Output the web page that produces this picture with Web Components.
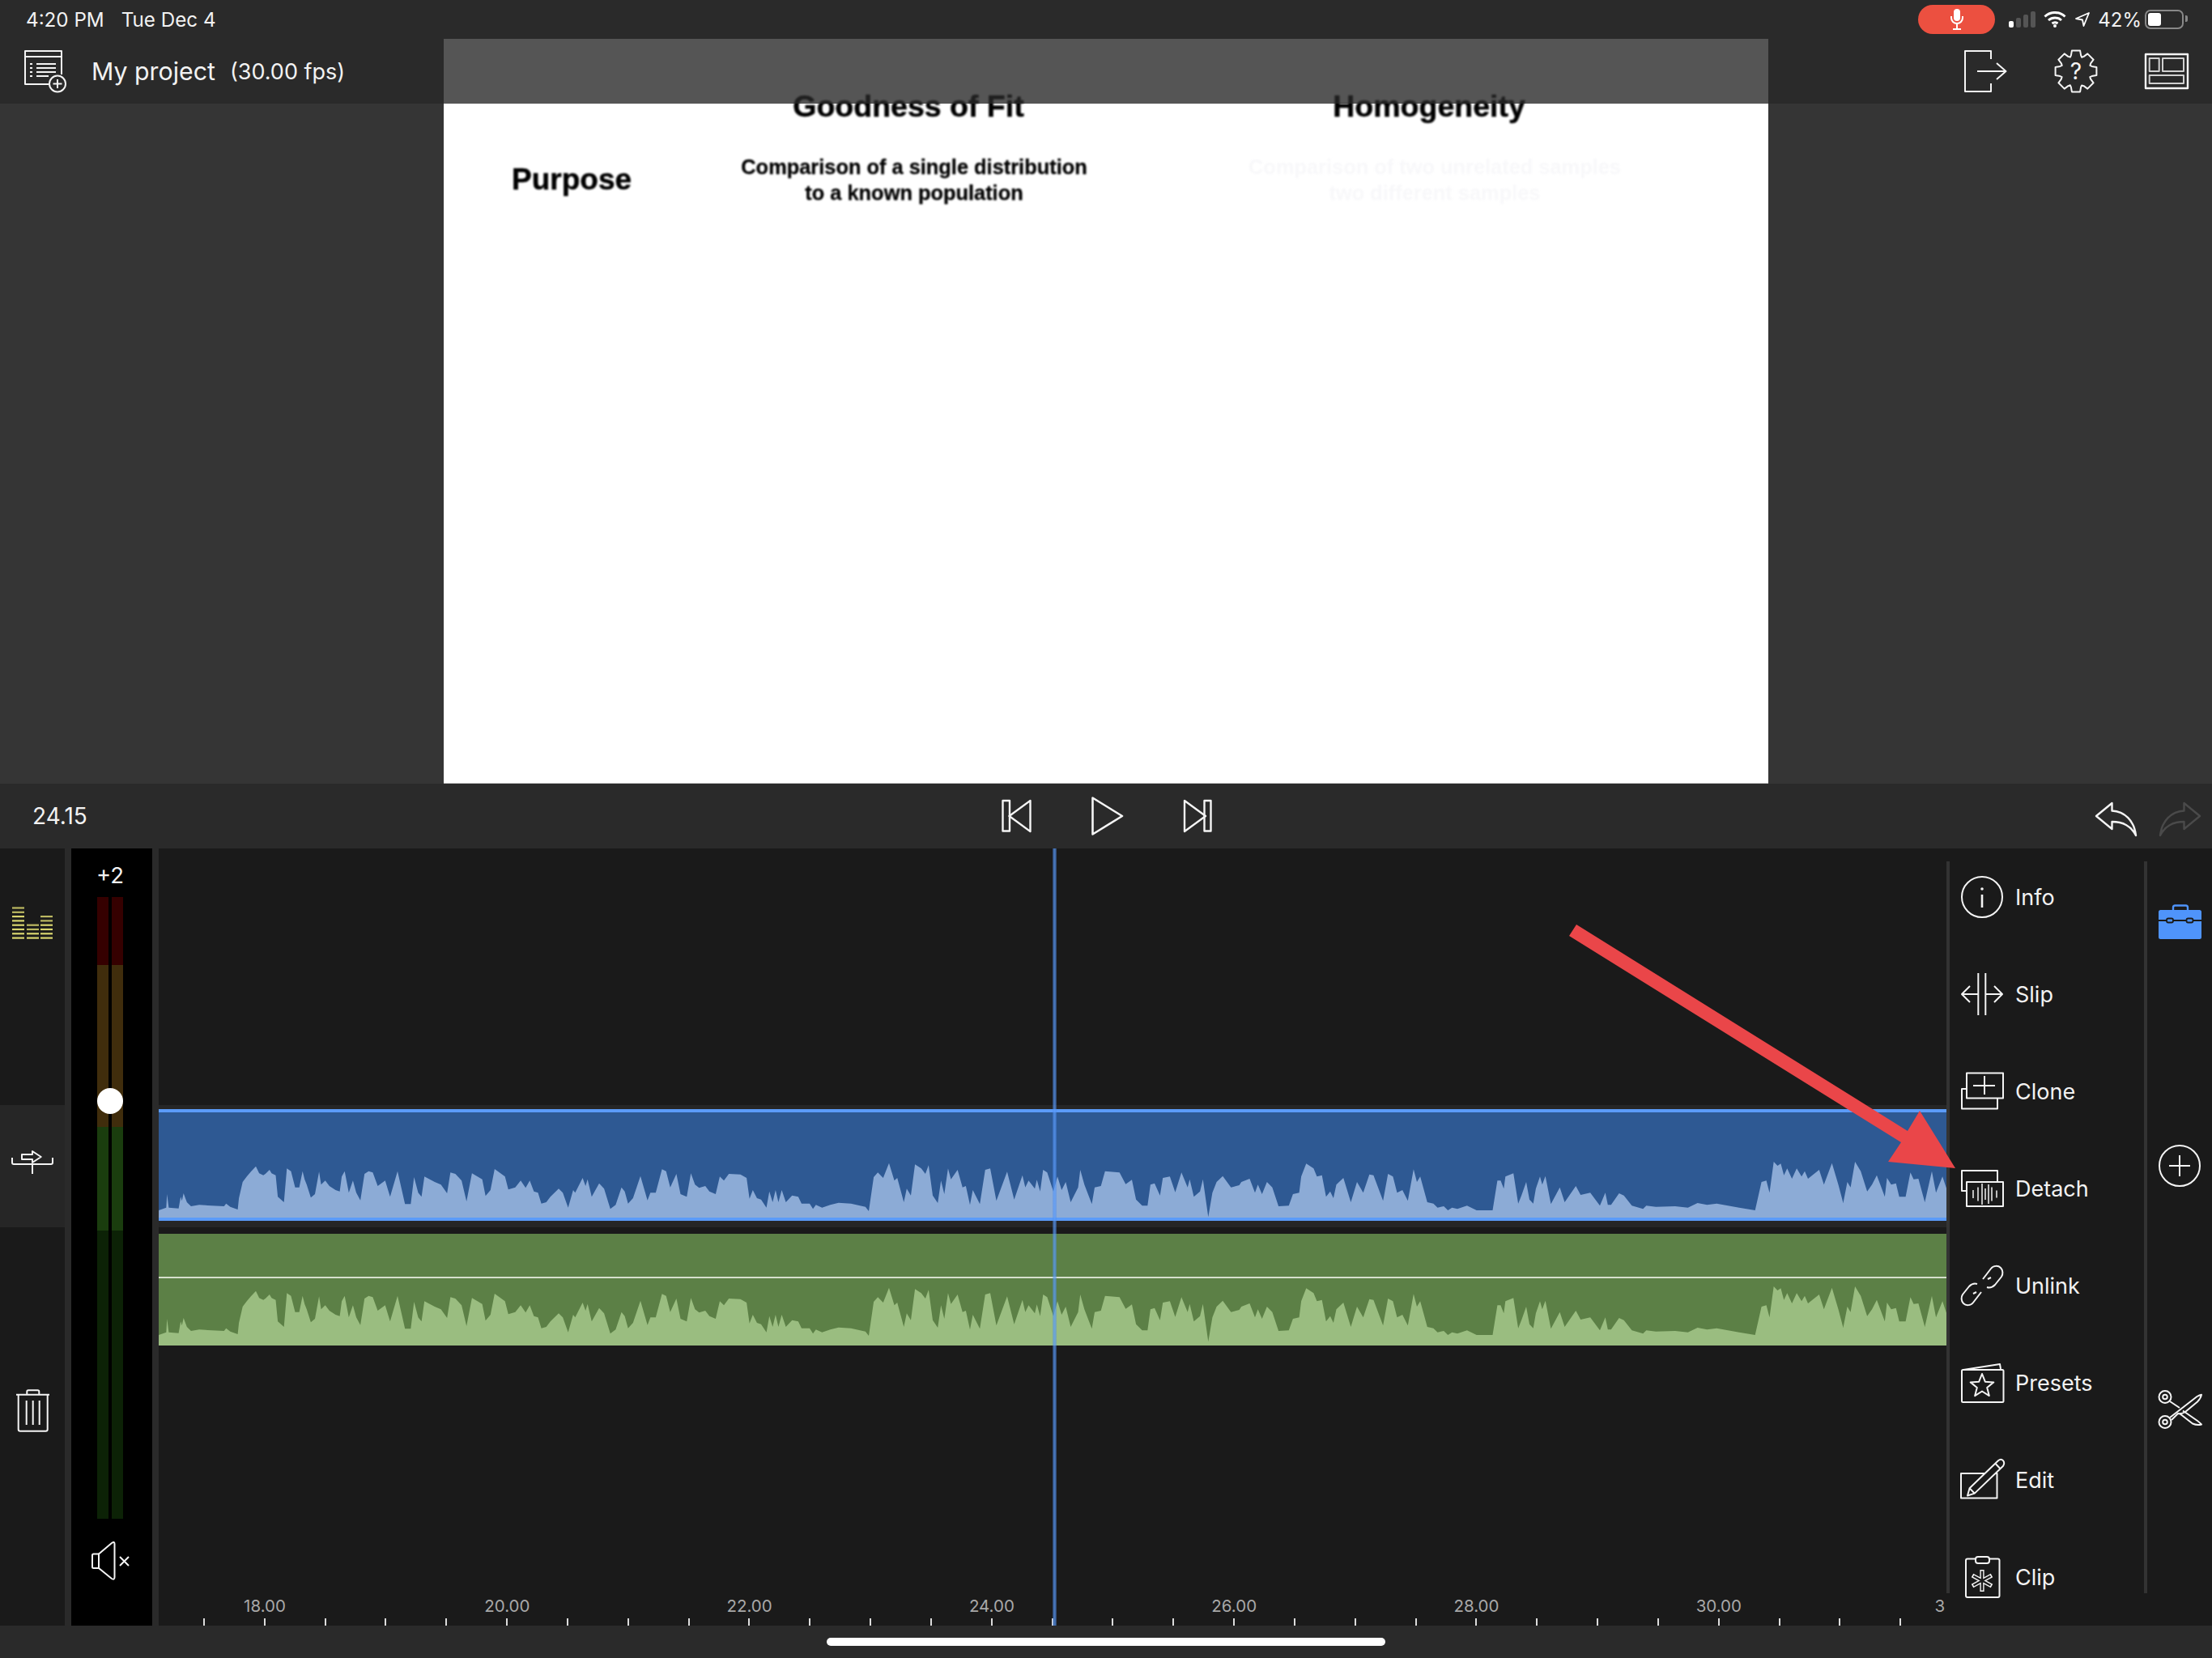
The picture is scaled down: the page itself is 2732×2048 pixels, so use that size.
<!DOCTYPE html>
<html>
<head>
<meta charset="utf-8">
<title>My project</title>
<style>
html, body { margin: 0; padding: 0; background: #2a2a2a; }
</style>
</head>
<body>
<app-shell>
    <status-bar></status-bar>
    <preview-stage>
        <slide-view></slide-view>
        <app-toolbar slot="overlay"></app-toolbar>
    </preview-stage>
    <transport-bar></transport-bar>
    <edit-area></edit-area>
    <home-bar></home-bar>
    <annotation-arrow></annotation-arrow>
</app-shell>

<script>
const UI_FONT = `Inter, "Noto Sans", sans-serif`;

function gearPath(cx, cy) {
    const pts = [];
    for (let i = 0; i < 8; i++) {
        const a = i * Math.PI / 4 - Math.PI / 2;
        [[18.8, -0.39], [20.5, -0.3], [25.9, -0.2], [25.9, 0.2], [20.5, 0.3]].forEach(([r, d]) => {
            pts.push((cx + r * Math.cos(a + d)).toFixed(1) + ' ' + (cy + r * Math.sin(a + d)).toFixed(1));
        });
    }
    return 'M' + pts.join(' L') + ' Z';
}

function eqBars() {
    let out = '';
    [[1, 8], [19, 4], [36, 6]].forEach(([x, rows]) => {
        for (let r = 0; r < rows; r++) {
            out += `<rect x="${x}" y="${44.5 - r * 5.3}" width="15" height="2.2" fill="#d8d56e" opacity="${r > rows - 3 ? 0.85 : 1}"/>`;
        }
    });
    return out;
}

function waveLines() {
    const xs = [15, 21, 26, 30, 34, 38, 44];
    const hs = [10, 17, 26, 14, 24, 17, 9];
    return xs.map((x, i) => `M${x} ${33 - hs[i] / 2} V${33 + hs[i] / 2}`).join(' ');
}

// all icons are drawn in a 52x52 box
const ICONS = {
    listplus: `<path d="M30 42 H1 V1 H46 V30 M1 8 H46"/>
        <path d="M15 17 H39 M15 22 H39 M15 27 H39 M15 32 H30" />
        <path d="M7 17 H10 M7 22 H10 M7 27 H10 M7 32 H10" />
        <circle cx="41" cy="41.5" r="10"/><path d="M41 36 V47 M35.5 41.5 H46.5"/>`,
    exit: `<path d="M33 11 V1 H1 V51 H33 V41"/><path d="M16 26 H51 M40 16 L51.5 26 L40 36"/>`,
    gear: `<path d="${gearPath(26, 26)}"/>
        <text x="26" y="36" text-anchor="middle" font-size="28" fill="currentColor" stroke="none" font-family="Inter, sans-serif">?</text>`,
    layout: `<rect x="0" y="5" width="52" height="42" stroke-width="2.4"/>
        <g stroke="#d0d0d0"><rect x="4.7" y="10" width="12" height="16"/><rect x="21" y="10" width="26" height="16"/><rect x="4.7" y="31" width="42.3" height="10"/></g>`,
    back: `<rect x="10.5" y="7" width="8.5" height="37.5"/><path d="M44.5 7 V45 L18.5 26 Z"/>`,
    play: `<path d="M9.5 3.5 V48.5 L46 26 Z"/>`,
    forward: `<rect x="35.5" y="7" width="8" height="37.5"/><path d="M11 7 V45 L37 26 Z"/>`,
    undo: `<path d="M1 26 L20.5 10 V19.5 C36 20 48 32 50 50 C44 38 34 33 20.5 33 V42 Z"/>`,
    redo: `<path d="M49 26 L29.5 10 V19.5 C14 20 2 32 0 50 C6 38 16 33 29.5 33 V42 Z"/>`,
    info: `<circle cx="26" cy="26" r="25"/><path d="M26 23 V39" stroke-width="2.6"/><circle cx="26" cy="16" r="1.8" fill="currentColor" stroke="none"/>`,
    slip: `<path d="M21.3 0 V52 M30.3 0 V52 M1 26 H21 M30 26 H51 M11 16 L1 26 L11 36 M41 16 L51 26 L41 36"/>`,
    clone: `<rect x="7" y="3.5" width="45" height="31"/><path d="M15 19 H42 M29 7 V30"/><path d="M7 23 H1 V47.5 H45 V35"/>`,
    detach: `<path d="M7 29 H1 V4 H45 V18"/><rect x="7" y="18" width="45" height="30"/><path d="${waveLines()}" stroke-width="1.5"/>`,
    unlink: `<path d="M27 18 L37 5 C40 1 46 1 49 4 C52 7 52 12 50 15 L42 25 C39 28 35 29 32 28"/>
        <path d="M25 34 L15 47 C12 51 6 51 3 48 C0 45 0 40 2 37 L10 27 C13 24 17 23 20 24"/>
        <path d="M33 18 L37 16 M19 34 L15 36"/>`,
    presets: `<rect x="1" y="10" width="51.5" height="40" rx="1.5"/><path d="M3 10 L48 3 L49 9"/>
        <path d="M26 15 L29.8 24.7 L40.3 25.4 L32.2 32 L34.8 42.1 L26 36.5 L17.2 42.1 L19.8 32 L11.7 25.4 L22.2 24.7 Z"/>`,
    edit: `<rect x="0" y="18" width="44.5" height="30.5"/>
        <path fill="#1a1a1a" d="M8 45.5 L10.6 36.2 L45.9 2.3 C48 0.5 50.5 0.5 52 2.2 C53.5 4 53.5 6.5 52.1 8.7 L16.8 42.6 Z"/>
        <path d="M42.4 5.8 L48.6 12.2 M10.6 36.2 L16.8 42.6"/>`,
    clip: `<rect x="6" y="3.5" width="41.5" height="47.5" rx="2"/>
        <rect x="18" y="1" width="17" height="8" rx="3" fill="#1a1a1a"/>
        <g stroke-width="5.2"><path d="M26 17 V44 M14 24 L38 37 M14 37 L38 24"/></g>
        <g stroke-width="2.4" stroke="#1a1a1a"><path d="M26 18.5 V42.5 M15.5 24.8 L36.5 36.2 M15.5 36.2 L36.5 24.8"/></g>`,
    briefcase: `<g stroke="none" fill="#4f94fb"><rect x="0" y="11" width="53" height="36" rx="2.5"/></g>
        <rect x="18" y="5.5" width="18" height="8" rx="2.5" stroke="#4f94fb" stroke-width="2.4"/>
        <path d="M0 24 H53" stroke="#1a1a1a" stroke-width="2"/>
        <rect x="10" y="21.5" width="8" height="5" rx="2" stroke="#1a1a1a" stroke-width="1.8" fill="#4f94fb"/>
        <rect x="34.5" y="21.5" width="8" height="5" rx="2" stroke="#1a1a1a" stroke-width="1.8" fill="#4f94fb"/>`,
    plus: `<circle cx="26" cy="26" r="25"/><path d="M13 26 H39 M26 13 V39"/>`,
    scissors: `<circle cx="8" cy="10.5" r="7.5"/><circle cx="8" cy="10.5" r="2.8"/>
        <circle cx="8" cy="41.5" r="7.5"/><circle cx="8" cy="41.5" r="2.8"/>
        <path d="M14 36 L47.5 10 C49.5 8.8 51 8 53 7.7 C52.5 11 50.5 14 48 16.5 L33 29 C30 31 27 31.5 24 31 L16 39"/>
        <path d="M14 16 L26 24 M30 27.5 L48 40 C50 41.5 51.5 43 53 44.5 C49 45.5 45.5 45 42 43.5 L26 31"/>`,
    route: `<path d="M13 16 H26 V12 L36.7 19 L26 26 V22 H13 Z"/><path d="M1 20 V26 Q1 28 3 28 H49 Q51 28 51 26 V20 M26 28 V40"/>`,
    trash: `<path d="M6 6.7 H47 M19.3 6.7 V3 Q19.3 1.2 21 1.2 H32.5 Q34.3 1.2 34.3 3 V6.7"/>
        <path d="M8.7 6.7 V49.5 Q8.7 51.7 11 51.7 H42.5 Q44.7 51.7 44.7 49.5 V6.7"/>
        <path d="M18.7 14 V44 M26.7 14 V44 M34.7 14 V44"/>`,
    mute: `<path d="M12 17.5 H5.5 Q4 17.5 4 19 V33.5 Q4 35 5.5 35 H12"/>
        <path d="M12 17.5 L28 4 Q31.5 1.5 31.5 5 V46 Q31.5 50 28 48 L12 35 Z"/>
        <path d="M38 21 L49 32 M49 21 L38 32"/>`,
    eq: eqBars()
};

class AppIcon extends HTMLElement {
    constructor() {
        super();
        this.attachShadow({mode: 'open'});
    }
    connectedCallback() {
        const name = this.getAttribute('name');
        this.shadowRoot.innerHTML = `
        <style>
        :host { display: block; width: 52px; height: 52px; flex: none; color: #f4f4f4; }
        svg { display: block; overflow: visible; }
        </style>
        <svg width="52" height="52" viewBox="0 0 52 52" fill="none" stroke="currentColor"
             stroke-width="${this.getAttribute('stroke') || 2}" stroke-linejoin="round">${ICONS[name]}</svg>`;
    }
}

class AppShell extends HTMLElement {
    constructor() {
        super();
        this.attachShadow({mode: 'open'});
        this.shadowRoot.innerHTML = `
        <style>
        :host {
            display: flex;
            flex-direction: column;
            position: relative;
            width: 2732px;
            height: 2048px;
            overflow: hidden;
            background: #2a2a2a;
            font-family: ${UI_FONT};
        }
        </style>
        <slot></slot>`;
    }
}

class StatusBar extends HTMLElement {
    constructor() {
        super();
        this.attachShadow({mode: 'open'});
        this.shadowRoot.innerHTML = `
        <style>
        :host {
            display: flex;
            align-items: center;
            height: 48px;
            flex: none;
            padding: 0 35px 0 32px;
            background: #2a2a2a;
            color: #f2f2f2;
            font-size: 24.2px;
        }
        .date { margin-left: 21px; }
        .right { margin-left: auto; display: flex; align-items: center; }
        .mic {
            width: 95px; height: 36px; border-radius: 18px; background: #ec5040;
            display: flex; align-items: center; justify-content: center;
        }
        .signal { display: flex; align-items: flex-end; gap: 3px; height: 20px; margin-left: 17px; }
        .signal i { display: block; width: 6px; border-radius: 2px; background: #555; }
        .signal i:first-child { background: #fff; }
        .wifi { margin-left: 10px; }
        .loc { margin-left: 11px; }
        .pct { margin-left: 10px; font-size: 24px; }
        .batt {
            position: relative;
            margin-left: 4px; width: 48px; height: 24px; box-sizing: border-box;
            border: 2px solid #888; border-radius: 7px; padding: 2px;
        }
        .batt b { display: block; width: 16px; height: 16px; background: #fff; border-radius: 3px; }
        .batt::after {
            content: ''; position: absolute; right: -7px; top: 5px; width: 3px; height: 8px;
            background: #888; border-radius: 0 2px 2px 0;
        }
        </style>
        <span>4:20 PM</span><span class="date">Tue Dec 4</span>
        <div class="right">
            <div class="mic">
                <svg width="16" height="26" viewBox="0 0 16 26" fill="none" stroke="#fff" stroke-width="2">
                    <rect x="4" y="0" width="8" height="15" rx="4" fill="#fff" stroke="none"/>
                    <path d="M1 9 V11 A7 7 0 0 0 15 11 V9 M8 18 V25 M3 25 H13"/>
                </svg>
            </div>
            <div class="signal"><i style="height:8px"></i><i style="height:12px"></i><i style="height:16px"></i><i style="height:20px"></i></div>
            <svg class="wifi" width="28" height="20" viewBox="0 0 28 20" fill="none" stroke="#fff" stroke-width="3">
                <path d="M1.5 6.5 A18 18 0 0 1 26.5 6.5 M6 11 A12 12 0 0 1 22 11 M10.5 15 A6 6 0 0 1 17.5 15"/>
                <circle cx="14" cy="18" r="2" fill="#fff" stroke="none"/>
            </svg>
            <svg class="loc" width="18" height="18" viewBox="0 0 18 18" fill="none" stroke="#fff" stroke-width="1.8" stroke-linejoin="round">
                <path d="M17 1 L1 8 L9 9.5 L10.5 17 Z"/>
            </svg>
            <span class="pct">42%</span>
            <div class="batt"><b></b></div>
        </div>`;
    }
}

class PreviewStage extends HTMLElement {
    constructor() {
        super();
        this.attachShadow({mode: 'open'});
        this.shadowRoot.innerHTML = `
        <style>
        :host {
            display: flex;
            justify-content: center;
            position: relative;
            height: 920px;
            flex: none;
            background: #353535;
        }
        .over { position: absolute; left: 0; right: 0; top: 0; }
        </style>
        <slot></slot>
        <div class="over"><slot name="overlay"></slot></div>`;
    }
}

class SlideView extends HTMLElement {
    constructor() {
        super();
        this.attachShadow({mode: 'open'});
        this.shadowRoot.innerHTML = `
        <style>
        :host {
            display: block;
            width: 1636px;
            height: 920px;
            box-sizing: border-box;
            border-bottom: 1px solid #c4c4c4;
            background: #fff;
            font-family: "Liberation Sans", Arial, sans-serif;
            color: #000;
        }
        .grid {
            display: grid;
            grid-template-columns: 300px 562px 724px;
            grid-template-rows: 44px 138px;
            padding-top: 61px;
            text-align: center;
            align-items: center;
            filter: blur(0.8px);
        }
        .head { font-size: 37.5px; font-weight: bold; line-height: 44px; padding-right: 14px; -webkit-text-stroke: 0.5px #000; }
        .row { font-size: 37px; font-weight: bold; text-align: left; padding-left: 84px; -webkit-text-stroke: 0.5px #000; }
        .cell { font-size: 25.4px; font-weight: bold; line-height: 32px; -webkit-text-stroke: 0.3px #000; }
        .cell.ghost { color: #f8f8fa; -webkit-text-stroke: 0; }
        </style>
        <div class="grid">
            <div></div>
            <div class="head">Goodness of Fit</div>
            <div class="head">Homogeneity</div>
            <div class="row">Purpose</div>
            <div class="cell">Comparison of a single distribution<br>to a known population</div>
            <div class="cell ghost">Comparison of two unrelated samples<br>two different samples</div>
        </div>`;
    }
}

class AppToolbar extends HTMLElement {
    constructor() {
        super();
        this.attachShadow({mode: 'open'});
        this.shadowRoot.innerHTML = `
        <style>
        :host {
            display: flex;
            align-items: center;
            height: 80px;
            padding: 0 30px;
            background: rgba(39, 39, 39, 0.787);
            color: #f2f2f2;
        }
        .title { margin-left: 31px; font-size: 30.3px; }
        .fps { margin-left: 18px; font-size: 27px; }
        .right { margin-left: auto; display: flex; gap: 60px; }
        </style>
        <app-icon name="listplus"></app-icon>
        <span class="title">My project</span><span class="fps">(30.00 fps)</span>
        <div class="right">
            <app-icon name="exit"></app-icon>
            <app-icon name="gear"></app-icon>
            <app-icon name="layout"></app-icon>
        </div>`;
    }
}

class TransportBar extends HTMLElement {
    constructor() {
        super();
        this.attachShadow({mode: 'open'});
        this.shadowRoot.innerHTML = `
        <style>
        :host {
            display: grid;
            grid-template-columns: 1fr auto 1fr;
            align-items: center;
            height: 80px;
            flex: none;
            background: #2a2a2a;
            color: #f2f2f2;
            font-size: 28px;
        }
        .time { padding-left: 40px; }
        .mid { display: flex; gap: 60px; }
        .undo { display: flex; gap: 28px; justify-content: flex-end; padding-right: 12px; }
        .off { color: #4a4a4a; }
        </style>
        <span class="time">24.15</span>
        <div class="mid">
            <app-icon name="back" stroke="2.4"></app-icon>
            <app-icon name="play" stroke="2.6"></app-icon>
            <app-icon name="forward" stroke="2.4"></app-icon>
        </div>
        <div class="undo">
            <app-icon name="undo" stroke="2.4"></app-icon>
            <app-icon class="off" name="redo" stroke="2.4"></app-icon>
        </div>`;
    }
}

class EditArea extends HTMLElement {
    constructor() {
        super();
        this.attachShadow({mode: 'open'});
        this.shadowRoot.innerHTML = `
        <style>
        :host {
            display: flex;
            height: 960px;
            flex: none;
            background: #2a2a2a;
        }
        level-meter { margin: 0 8px; }
        </style>
        <track-sidebar></track-sidebar>
        <level-meter></level-meter>
        <timeline-view></timeline-view>
        <tool-column></tool-column>
        <side-actions></side-actions>`;
    }
}

class TrackSidebar extends HTMLElement {
    constructor() {
        super();
        this.attachShadow({mode: 'open'});
        this.shadowRoot.innerHTML = `
        <style>
        :host {
            display: flex;
            flex-direction: column;
            width: 80px;
            flex: none;
            background: #1a1a1a;
        }
        .cell { display: flex; justify-content: center; }
        .eq { height: 317px; padding-top: 65px; box-sizing: border-box; }
        .route { height: 151px; background: #262626; padding-top: 45px; box-sizing: border-box; }
        .trash { flex: 1; padding-top: 200px; box-sizing: border-box; }
        </style>
        <div class="cell eq"><app-icon name="eq" stroke="0"></app-icon></div>
        <div class="cell route"><app-icon name="route"></app-icon></div>
        <div class="cell trash"><app-icon name="trash"></app-icon></div>`;
    }
}

class LevelMeter extends HTMLElement {
    constructor() {
        super();
        this.attachShadow({mode: 'open'});
        this.shadowRoot.innerHTML = `
        <style>
        :host {
            display: flex;
            flex-direction: column;
            align-items: center;
            width: 100px;
            padding-right: 4px;
            box-sizing: border-box;
            flex: none;
            background: #000;
            color: #f2f2f2;
        }
        .db { height: 60px; line-height: 66px; font-size: 27.5px; }
        .bars { position: relative; display: flex; gap: 4px; height: 768px; }
        .bars i {
            display: block; width: 14px;
            background: linear-gradient(#350000 0 84px, #402d0c 84px 284px, #1a3d0e 284px 412px, #0c2206 412px);
        }
        .knob {
            position: absolute; left: 0; top: 236px; width: 32px; height: 32px;
            border-radius: 50%; background: #fff;
        }
        app-icon { margin-top: 26px; }
        </style>
        <div class="db">+2</div>
        <div class="bars"><i></i><i></i><div class="knob"></div></div>
        <app-icon name="mute"></app-icon>`;
    }
}

// waveform outline read off the reference, in three stretches
const WAVE_A = [12,435,30,425,32,375,36,425,60,428,65,385,68,400,72,372,80,405,90,420,110,415,140,418,170,420,175,410,185,422,203,432,206,390,215,330,225,310,235,292,247,272,255,298,265,305,270,300,280,285,285,298,295,305,300,385,315,405,322,280,332,290,342,350,352,350,360,290,365,320,370,340,380,388,390,375,400,292,405,340,415,325,425,345,440,360,450,365,455,310,462,290,472,370,482,325,490,370,500,398,510,300,520,290,530,295,542,345,560,325,572,385,590,290,608,412,622,412,630,312,640,370,648,385,655,310,680,330,695,340,710,372,718,295,730,300,745,325,757,402,770,298,795,320,803,382,815,360,825,282,850,310,858,358,875,350,888,325,900,352,910,325,920,365,930,370,938,410,950,405,960,385,980,355,990,370,1003,425,1015,360,1020,370,1038,315,1045,345,1050,320,1060,385,1078,335,1090,355,1105,430,1118,415,1132,350,1140,365,1148,410,1160,390,1178,308,1195,398,1202,370,1215,370,1230,283,1240,290,1250,350,1265,300,1275,375,1290,385,1300,298,1310,340,1320,352,1335,345,1345,365,1360,375,1370,310,1380,325,1392,300,1420,302,1435,315,1442,392,1450,360,1460,390,1470,395,1483,425,1490,365,1498,405,1505,360,1512,405,1520,360,1530,405,1545,380,1560,385,1568,410];
const WAVE_B = [0,410,8,430,15,415,30,425,50,415,70,407,100,410,135,422,143,438,155,312,165,295,178,315,192,260,205,325,212,315,228,405,235,355,245,380,255,265,270,280,280,300,288,268,298,380,310,408,318,325,326,375,335,280,342,320,358,285,370,350,378,345,388,415,395,360,412,412,425,285,437,280,452,400,478,292,495,395,515,305,522,350,530,325,545,355,550,322,558,365,565,285,575,295,590,365,600,310,610,360,620,330,632,405,650,350,655,285,665,340,683,412,690,350,705,345,715,290,750,295,765,338,780,322,790,395,805,418,818,418,825,340,835,335,848,380,855,315,872,310,885,368,900,295,915,350,920,320,930,385,945,365,952,320,965,460,975,370,985,330,1000,308,1020,350,1040,342,1045,330,1065,318,1078,370,1085,340,1095,375,1107,330,1120,350,1135,420,1160,418,1170,375,1185,370,1190,310,1202,262,1220,280,1228,310,1240,305,1250,385,1260,365,1268,390,1275,340,1292,315,1310,405,1325,330,1340,370,1355,302,1365,305,1388,400,1400,300,1412,310,1422,370,1435,360,1448,400,1462,283,1470,330,1478,310,1495,405,1510,410,1520,425,1535,420,1545,435,1555,425,1568,430];
const WAVE_C = [0,430,30,418,60,435,110,435,125,325,135,325,145,355,150,310,175,298,190,410,200,380,215,330,225,395,237,410,245,355,258,310,265,340,275,308,292,412,320,350,335,405,370,345,385,378,415,370,445,418,462,370,470,415,480,415,505,372,520,380,545,418,580,430,590,418,620,422,680,420,720,425,750,408,780,415,810,410,880,425,930,435,950,330,965,325,975,370,988,255,1000,270,1010,262,1020,305,1030,280,1045,318,1060,280,1075,310,1085,290,1095,318,1130,285,1145,340,1170,260,1190,340,1205,408,1218,330,1228,350,1242,255,1260,290,1280,365,1295,340,1310,305,1335,385,1342,315,1355,340,1370,335,1380,385,1400,385,1415,295,1425,320,1440,318,1460,405,1482,290,1495,370,1515,310,1528,355];

function wavePoints() {
    const pts = ['196,1508'];
    const add = (arr, x0, sx) => {
        for (let i = 0; i < arr.length; i += 2) {
            pts.push((x0 + arr[i] / sx).toFixed(1) + ',' + (1350 + arr[i + 1] / 3).toFixed(1));
        }
    };
    add(WAVE_A, 190, 1.96);
    add(WAVE_B, 1000, 1.96);
    add(WAVE_C, 1800, 2.529);
    pts.push('2404,1508');
    return pts.join(' ');
}

class WaveTrack extends HTMLElement {
    constructor() {
        super();
        this.attachShadow({mode: 'open'});
    }
    connectedCallback() {
        const selected = this.hasAttribute('selected');
        const fill = selected ? '#2e5993' : '#5c8046';
        const wave = selected ? '#8cabd6' : '#9abd80';
        this.shadowRoot.innerHTML = `
        <style>
        :host {
            display: block;
            position: relative;
            height: 138px;
            background: ${fill};
            overflow: hidden;
        }
        svg { display: block; filter: blur(0.4px); }
        .edge {
            position: absolute; left: 0; right: 0; top: 0; bottom: 0;
            border-top: 4px solid #5b9bf8; border-bottom: 4px solid #5b9bf8;
        }
        .gain { position: absolute; left: 0; right: 0; top: 53px; height: 2px; background: #d5dfcc; }
        </style>
        <svg width="2208" height="138" viewBox="196 1370 2208 138" preserveAspectRatio="none">
            <polygon fill="${wave}" points="${wavePoints()}"/>
        </svg>
        ${selected ? '<div class="edge"></div>' : '<div class="gain"></div>'}`;
    }
}

class TimeRuler extends HTMLElement {
    constructor() {
        super();
        this.attachShadow({mode: 'open'});
        let cells = '';
        for (let t = 18; t <= 30; t += 2) {
            cells += `<span>${t.toFixed(2)}</span>`;
        }
        this.shadowRoot.innerHTML = `
        <style>
        :host {
            display: block;
            overflow: hidden;
            color: #a8a8a8;
            font-size: 20.5px;
        }
        .labels { display: flex; margin-left: -18.65px; height: 24px; line-height: 24px; margin-bottom: 3px; }
        .labels span { flex: none; width: 299.3px; text-align: center; }
        .labels span.last { width: 131px; box-sizing: border-box; padding-left: 117px; text-align: left; }
        .ticks {
            height: 9px;
            margin-left: 55px;
            background: repeating-linear-gradient(90deg, #dcdcdc 0 2px, transparent 2px 74.83px);
        }
        </style>
        <div class="labels">${cells}<span class="last">3</span></div>
        <div class="ticks"></div>`;
    }
}

class TimelineView extends HTMLElement {
    constructor() {
        super();
        this.attachShadow({mode: 'open'});
        this.shadowRoot.innerHTML = `
        <style>
        :host {
            display: flex;
            flex-direction: column;
            position: relative;
            width: 2208px;
            flex: none;
            background: #1a1a1a;
        }
        .band { margin-top: 317px; padding: 5px 0 8px; background: #262626; }
        wave-track.audio { margin-top: 8px; }
        time-ruler { margin-top: auto; }
        .playhead {
            position: absolute; left: 1104px; top: 0; bottom: 0; width: 5px;
            background: linear-gradient(90deg, rgba(70, 130, 230, 0.35), rgba(90, 155, 250, 0.72) 40% 60%, rgba(70, 130, 230, 0.35));
        }
        </style>
        <div class="band"><wave-track selected></wave-track></div>
        <wave-track class="audio"></wave-track>
        <time-ruler></time-ruler>
        <div class="playhead"></div>`;
    }
}

class ToolItem extends HTMLElement {
    constructor() {
        super();
        this.attachShadow({mode: 'open'});
        this.shadowRoot.innerHTML = `
        <style>
        :host {
            display: flex;
            align-items: center;
            gap: 15px;
            height: 120px;
            padding-left: 14px;
            color: #f2f2f2;
            font-size: 27px;
        }
        </style>
        <slot name="icon"></slot><span><slot></slot></span>`;
    }
}

class ToolColumn extends HTMLElement {
    constructor() {
        super();
        this.attachShadow({mode: 'open'});
        const tools = [
            ['info', 'Info'], ['slip', 'Slip'], ['clone', 'Clone'], ['detach', 'Detach'],
            ['unlink', 'Unlink'], ['presets', 'Presets'], ['edit', 'Edit'], ['clip', 'Clip']
        ];
        this.shadowRoot.innerHTML = `
        <style>
        :host {
            display: flex;
            width: 248px;
            flex: none;
            background: #1a1a1a;
        }
        .sep { width: 4px; margin: 16px 0 40px; background: #333; flex: none; }
        .list { flex: 1; }
        </style>
        <div class="sep"></div>
        <div class="list">
            ${tools.map(([icon, label]) => `<tool-item><app-icon slot="icon" name="${icon}"></app-icon>${label}</tool-item>`).join('')}
        </div>
        <div class="sep"></div>`;
    }
}

class SideActions extends HTMLElement {
    constructor() {
        super();
        this.attachShadow({mode: 'open'});
        this.shadowRoot.innerHTML = `
        <style>
        :host {
            display: flex;
            flex-direction: column;
            align-items: center;
            gap: 249px;
            width: 80px;
            flex: none;
            padding-top: 65px;
            box-sizing: border-box;
            background: #1a1a1a;
        }
        </style>
        <app-icon name="briefcase"></app-icon>
        <app-icon name="plus"></app-icon>
        <app-icon name="scissors"></app-icon>`;
    }
}

class HomeBar extends HTMLElement {
    constructor() {
        super();
        this.attachShadow({mode: 'open'});
        this.shadowRoot.innerHTML = `
        <style>
        :host {
            display: flex;
            align-items: center;
            justify-content: center;
            height: 40px;
            flex: none;
            background: #2a2a2a;
        }
        i { display: block; width: 690px; height: 10px; border-radius: 5px; background: #fff; }
        </style>
        <i></i>`;
    }
}

// the red pointer that was painted on top of the screenshot
class AnnotationArrow extends HTMLElement {
    constructor() {
        super();
        this.attachShadow({mode: 'open'});
        this.shadowRoot.innerHTML = `
        <style>
        :host { position: absolute; left: 0; top: 0; pointer-events: none; }
        svg { display: block; }
        </style>
        <svg width="2732" height="2048" viewBox="0 0 2732 2048">
            <polygon fill="#ea4649" points="1947,1142 2356,1397 2371,1372 2415,1443 2332,1435 2348,1411 1938,1156"/>
        </svg>`;
    }
}

customElements.define('app-icon', AppIcon);
customElements.define('app-shell', AppShell);
customElements.define('status-bar', StatusBar);
customElements.define('preview-stage', PreviewStage);
customElements.define('slide-view', SlideView);
customElements.define('app-toolbar', AppToolbar);
customElements.define('transport-bar', TransportBar);
customElements.define('edit-area', EditArea);
customElements.define('track-sidebar', TrackSidebar);
customElements.define('level-meter', LevelMeter);
customElements.define('wave-track', WaveTrack);
customElements.define('time-ruler', TimeRuler);
customElements.define('timeline-view', TimelineView);
customElements.define('tool-item', ToolItem);
customElements.define('tool-column', ToolColumn);
customElements.define('side-actions', SideActions);
customElements.define('home-bar', HomeBar);
customElements.define('annotation-arrow', AnnotationArrow);
</script>
</body>
</html>
